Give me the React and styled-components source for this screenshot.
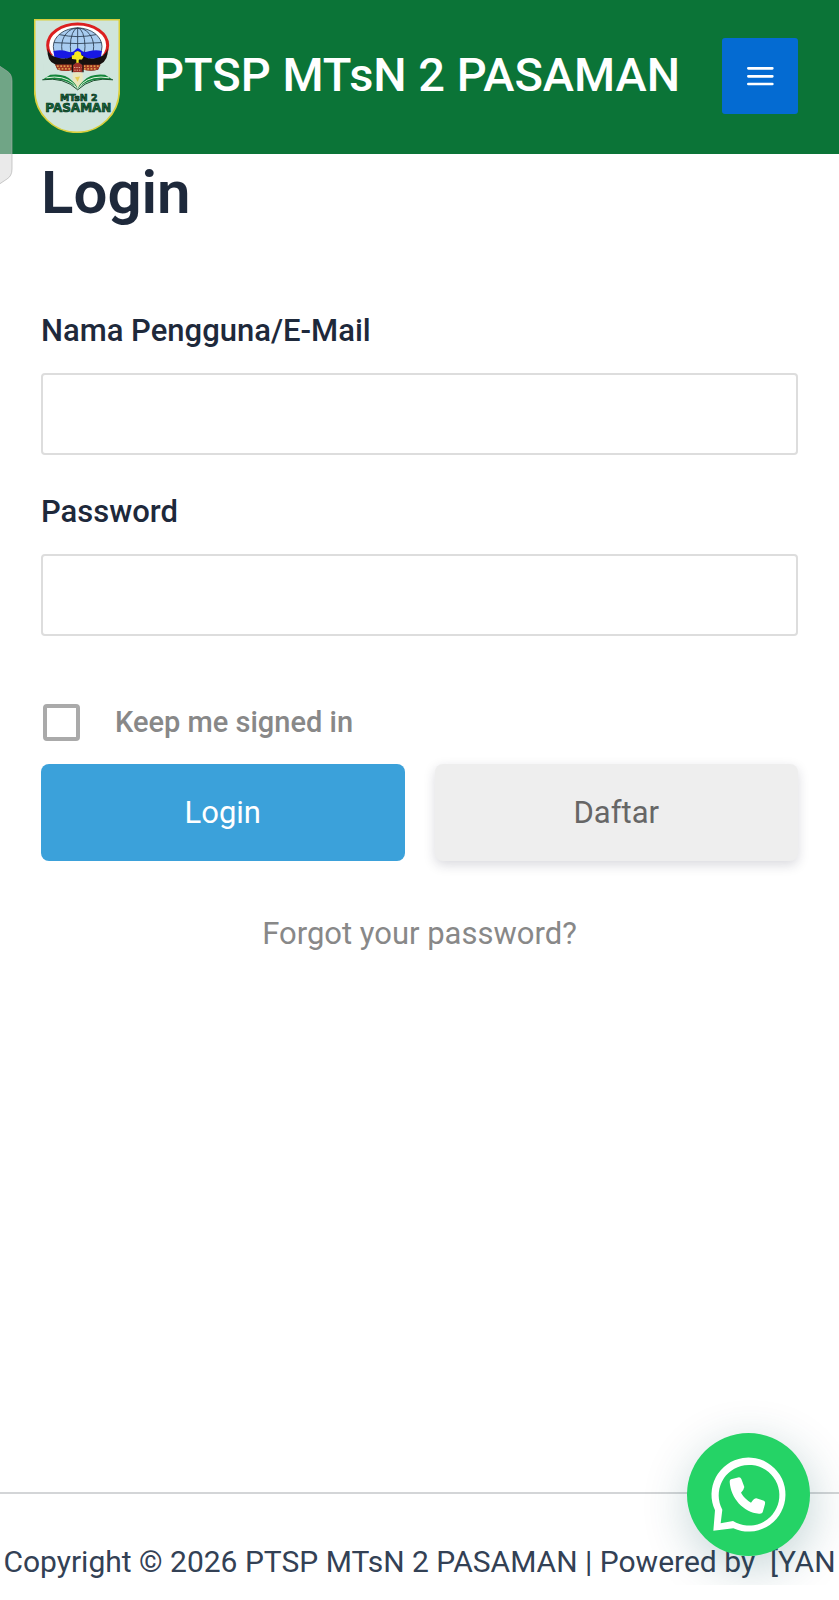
import React from "react";
import styled, { createGlobalStyle } from "styled-components";

const GlobalStyle = createGlobalStyle`
  *, *::before, *::after { box-sizing: border-box; }
  body {
    margin: 0;
    background: #fff;
    color: #1e293b;
    font-family: Roboto, "Liberation Sans", sans-serif;
  }
`;

const Page = styled.div`
  display: flex;
  flex-direction: column;
  min-height: 100vh;
  overflow-x: hidden;
`;

const Header = styled.header`
  display: flex;
  align-items: center;
  gap: 34px;
  padding: 19px 41px 21px 34px;
  background: #0b7437;
`;

const LogoLink = styled.a`
  flex: none;
  display: block;
  width: 86px;
  height: 114px;
`;

const SiteTitle = styled.a`
  flex: 1;
  padding-bottom: 2px;
  color: #fff;
  font-size: 47px;
  font-weight: 500;
  line-height: 60px;
  text-decoration: none;
  white-space: nowrap;
`;

const MenuButton = styled.button`
  flex: none;
  display: flex;
  width: 76px;
  height: 76px;
  padding: 0;
  border: 0;
  border-radius: 3px;
  background: #046bd2;
  cursor: pointer;
`;

const Drawing = styled.svg`
  display: block;
  width: 100%;
  height: 100%;
`;

const Main = styled.main`
  flex: 1;
  padding: 0 41px;
`;

const Heading = styled.h1`
  margin: 0 0 79px;
  font-size: 60px;
  font-weight: 600;
  line-height: 78px;
`;

const Field = styled.div`
  display: flex;
  flex-direction: column;
  gap: 22px;
  margin-bottom: 37px;
`;

const Label = styled.label`
  font-size: 31px;
  font-weight: 500;
  line-height: 40px;
`;

const TextInput = styled.input`
  width: 100%;
  height: 82px;
  padding: 0 24px;
  border: 2px solid #ddd;
  border-radius: 4px;
  background: #fff;
  color: #666;
  font: inherit;
  font-size: 31px;
`;

const Remember = styled.label`
  display: flex;
  align-items: center;
  gap: 35px;
  margin: 68px 0 23px;
  padding-left: 2px;
  color: #888;
  font-size: 29px;
  font-weight: 500;
  line-height: 37px;
`;

const Checkbox = styled.input`
  appearance: none;
  flex: none;
  width: 37px;
  height: 37px;
  margin: 0;
  border: 4px solid #aaa;
  border-radius: 4px;
  background: #fff;

  &:checked { background: #3ba1da; }
`;

const Actions = styled.div`
  display: grid;
  grid-template-columns: 1fr 1fr;
  gap: 30px;
`;

const ActionButton = styled.button`
  height: 97px;
  padding: 0;
  border: 0;
  border-radius: 8px;
  background: ${(p) => (p.$primary ? "#3ba1da" : "#eee")};
  color: ${(p) => (p.$primary ? "#fff" : "#666")};
  box-shadow: ${(p) => (p.$primary ? "none" : "0 4px 12px rgba(30, 30, 60, 0.17)")};
  font: inherit;
  font-size: 31px;
  line-height: 40px;
  cursor: pointer;
`;

const Forgot = styled.p`
  margin: 53px 0;
  font-size: 31px;
  line-height: 40px;
  text-align: center;

  a { color: #888; text-decoration: none; }
`;

const Footer = styled.footer`
  display: flex;
  justify-content: center;
  padding: 48px 0 3px;
  border-top: 2px solid #d3d5d7;
  color: #334155;
  font-size: 30px;
  line-height: 40px;
  white-space: nowrap;
`;

const BottomBar = styled.div`
  position: relative;
  z-index: 3;
  height: 15px;
  background: #fff;
`;

const EdgeHandle = styled.div`
  position: fixed;
  z-index: 2;
  top: 64px;
  left: 0;
  width: 13px;
  height: 122px;
`;

const ChatLink = styled.a`
  position: fixed;
  z-index: 2;
  right: 29px;
  bottom: 44px;
  width: 123px;
  height: 123px;
  border-radius: 50%;
  background: #25d366;
  box-shadow: 2px 12px 48px rgba(7, 74, 84, 0.24);
`;

function SchoolLogo() {
  return (
    <Drawing viewBox="102 57 258 343" preserveAspectRatio="none" aria-hidden="true">
      <path
        d="M104 59H358V270C358 342 302 398 231 398S104 342 104 270Z"
        fill="#d0e5dc"
        stroke="#d9cf3c"
        strokeWidth="5"
      />
      <ellipse cx="233" cy="136" rx="90" ry="64" fill="#fff" stroke="#dc2020" strokeWidth="9" />
      <path d="M130 190L155 166H312L338 190V212H130Z" fill="#d0e5dc" />
      <ellipse cx="233" cy="140" rx="73" ry="56" fill="#a9cdf0" />
      <g fill="none" stroke="#26384c" strokeWidth="2.5">
        <ellipse cx="233" cy="140" rx="73" ry="56" />
        <ellipse cx="233" cy="140" rx="48" ry="56" />
        <ellipse cx="233" cy="140" rx="22" ry="56" />
        <path d="M233 84V160M178 104Q233 116 288 104M162 128Q233 134 304 128" />
      </g>
      <path d="M160 153Q186 148 202 155Q217 160 225 151Q233 139 243 151Q252 160 266 154Q287 148 306 153L302 176H164Z" fill="#1718e4" />
      <path
        d="M143 145Q147 170 176 174Q209 181 222 164L233 185L246 164Q259 181 289 174Q318 169 323 145Q326 182 300 194L294 210Q265 215 248 207V195L233 184L218 195V207Q199 216 172 208L166 194Q139 184 143 145Z"
        fill="#17110f"
      />
      <path d="M165 194H218L222 202L216 211Q190 217 172 209ZM248 195H302L294 210Q267 216 249 209L244 202Z" fill="#a33a24" />
      <path d="M171 199H215M175 207H214M251 199H296M252 207H291" stroke="#f0c45c" strokeWidth="4" strokeDasharray="5 5" />
      <path d="M216 207V198L233 184L250 198V207L247 217H220Z" fill="#9d3028" />
      <path d="M217 217V194L233 183L249 194V217" fill="none" stroke="#171412" strokeWidth="4" />
      <path d="M222 203H244M223 211H243" stroke="#e4a78a" strokeWidth="3" strokeDasharray="4 3" />
      <path d="M216 177L215 167L222 165L224 157L233 153L242 157L244 166L251 170L246 179H236V189H229V179Z" fill="#f5e91e" />
      <path d="M218 220Q233 215 248 220V248L233 263L219 248Z" fill="#e9e6bd" />
      <path d="M225 232L240 230L233 246Z" fill="#e6cc56" />
      <path
        d="M127 240L151 225Q194 219 216 243Q230 254 233 269Q218 249 190 242Q160 235 127 240ZM339 240L315 225Q273 220 251 243Q237 254 233 269Q248 249 276 242Q306 235 339 240Z"
        fill="#14863b"
      />
      <path d="M139 234Q190 225 220 251L233 270L247 251Q276 225 327 234" fill="none" stroke="#e1f4df" strokeWidth="3" />
      <path d="M127 240Q191 230 233 270Q275 230 339 240" fill="none" stroke="#194d2b" strokeWidth="3" />
      <g
        fill="#14673a"
        stroke="#062f1b"
        strokeWidth="2"
        fontFamily="DejaVu Sans, sans-serif"
        fontWeight="700"
        textAnchor="middle"
      >
        <text x="236" y="304" fontSize="28">MTsN 2</text>
        <text x="235" y="336" fontSize="36">PASAMAN</text>
      </g>
    </Drawing>
  );
}

function MenuIcon() {
  return (
    <Drawing viewBox="0 0 228 228" aria-hidden="true">
      <path d="M79 91H151M79 115H151M79 138H151" stroke="#fff" strokeWidth="8" strokeLinecap="round" />
    </Drawing>
  );
}

function HandleShape() {
  return (
    <Drawing viewBox="0 0 13 122" aria-hidden="true">
      <path
        d="M-2 1L7 7Q12 10 12 17V105Q12 112 7 115L-2 121Z"
        fill="#d5d5d5"
        fillOpacity="0.5"
        stroke="#aaa"
        strokeOpacity="0.6"
      />
    </Drawing>
  );
}

function ChatIcon() {
  return (
    <Drawing viewBox="81 67 369 369" aria-hidden="true">
      <path
        fill="#fff"
        fillRule="evenodd"
        d="M160 360L165 299A111 111 0 1 1 220 353ZM182 338L219 331A91 91 0 1 0 187 297Z"
      />
      <path
        fill="#fff"
        d="M213 206L237 200Q242 200 244 205L253 229Q251 239 243 246Q253 264 273 276Q282 263 289 263L312 270Q317 273 315 280L308 305Q306 310 297 309C250 305 212 262 209 213Q209 207 213 206Z"
      />
    </Drawing>
  );
}

export default function App() {
  return (
    <>
      <GlobalStyle />
      <Page>
        <Header>
          <LogoLink href="#" aria-label="MTsN 2 Pasaman">
            <SchoolLogo />
          </LogoLink>
          <SiteTitle href="#">PTSP MTsN 2 PASAMAN</SiteTitle>
          <MenuButton type="button" aria-label="Menu">
            <MenuIcon />
          </MenuButton>
        </Header>
        <Main>
          <Heading>Login</Heading>
          <form onSubmit={(e) => e.preventDefault()}>
            <Field>
              <Label htmlFor="username">Nama Pengguna/E-Mail</Label>
              <TextInput id="username" type="text" autoComplete="username" />
            </Field>
            <Field>
              <Label htmlFor="password">Password</Label>
              <TextInput id="password" type="password" autoComplete="current-password" />
            </Field>
            <Remember>
              <Checkbox type="checkbox" />
              Keep me signed in
            </Remember>
            <Actions>
              <ActionButton type="submit" $primary>
                Login
              </ActionButton>
              <ActionButton type="button">Daftar</ActionButton>
            </Actions>
          </form>
          <Forgot>
            <a href="#">Forgot your password?</a>
          </Forgot>
        </Main>
        <Footer>
          <span>Copyright © 2026 PTSP MTsN 2 PASAMAN | Powered by &nbsp;[YAN</span>
        </Footer>
        <BottomBar />
      </Page>
      <EdgeHandle>
        <HandleShape />
      </EdgeHandle>
      <ChatLink href="#" aria-label="WhatsApp">
        <ChatIcon />
      </ChatLink>
    </>
  );
}
